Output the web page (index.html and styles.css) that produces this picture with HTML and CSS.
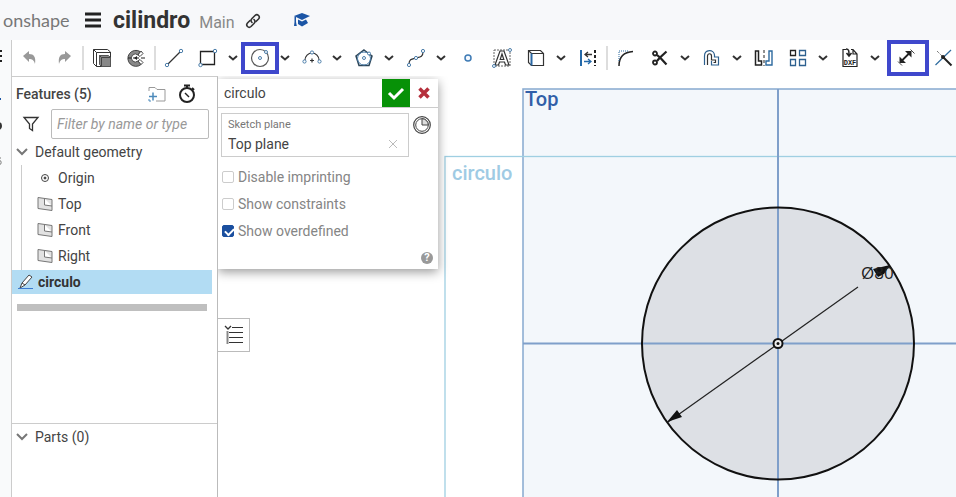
FILE: index.html
```html
<!DOCTYPE html>
<html lang="en">
<head>
<meta charset="utf-8">
<title>cilindro</title>
<link rel="stylesheet" href="styles.css">
</head>
<body>
<header class="header">
  <a class="brand" href="#">onshape</a>
  <button class="menu" aria-label="Menu"><svg width="16" height="16"><path d="M0 2h16M0 8h16M0 14h16" stroke="#222" stroke-width="3"/></svg></button>
  <h1 class="title">cilindro</h1>
  <span class="branch">Main</span>
  <button class="link" aria-label="Share link"><svg width="16" height="16" viewBox="0 0 16 16" fill="none" stroke="#333" stroke-width="1.600" stroke-linecap="round"><path d="M7 9.500C5.500 8 6 6.500 7 5.500L10 2.500C12.500 .3 15.700 3.500 13.500 6L11 8.500"/><path d="M9 6.500C10.500 8 10 9.500 9 10.500L6 13.500C3.500 15.700.3 12.500 2.500 10L5 7.500"/></svg></button>
  <button class="learn" aria-label="Learning center"><svg width="16" height="16" viewBox="0 0 16 16" fill="#1b55a5"><path d="M0 4 8 1l8 3-8 4z"/><path d="M.5 4.500h1.500V10l.8 4H0l.5-4zM4 7.500l4 2 4-2 2 3.500-6 3.500L4 12z"/></svg></button>
</header>
<div class="workspace">
  <aside class="rail" aria-label="Panels">
    <svg width="12" height="130"><path d="M0 11h2M0 16h2M0 21h2" stroke="#222" stroke-width="2"/><path d="M0 59h1" stroke="#1b55a5" stroke-width="2"/><circle cx="-2" cy="86" r="4" fill="#333"/><path d="M1 118H0M0 120.500c1.500 0 1.500 4 0 4" stroke="#777" fill="none"/></svg>
  </aside>
  <div class="main">
    <nav class="toolbar" aria-label="Sketch tools">
      <button class="tool" aria-label="Undo"><svg width="16" height="16" viewBox="0 0 16 16"><path d="M1 6l6-5v3c5 0 7 3 6 10-1-4-3-5-6-5v3z" fill="#999"/></svg></button>
      <button class="tool" aria-label="Redo"><svg width="16" height="16" viewBox="0 0 16 16"><path d="M15 6 9 1v3C4 4 2 7 3 14c1-4 3-5 6-5v3z" fill="#999"/></svg></button>
      <span class="sep"></span>
      <button class="tool" aria-label="Copy sketch"><svg width="20" height="20" viewBox="0 0 20 20" fill="none" stroke="#333"><path d="M1.500 1.500h14l3 2.500v14.500h-14l-3-3zM1.500 1.500l3 3h14M4.500 4.500v14"/><path d="M7.500 7.500h9l2 2v9h-9l-2-2z" fill="#888" stroke="#555"/><path d="M7.500 7.500l2 2h9M9.500 9.500v9" stroke="#444"/></svg></button>
      <button class="tool" aria-label="Imprint"><svg width="20" height="20" viewBox="0 0 20 20"><path d="M14 3.500A8 8 0 1 0 15 16.500l-3-3.500a4 4 0 1 1 0-6z" fill="#888" stroke="#444"/><path d="M12 7l3-4 2 2.500-3 3zM12 13l2-1.500 3 3-2 2z" stroke="#444" fill="#fff"/><path d="M2 10h3m2 0h6m2 0h4" stroke="#222" stroke-width="1.200"/><path d="M8 10l3-2v4z" fill="#222"/></svg></button>
      <span class="sep"></span>
      <button class="tool" aria-label="Line"><svg width="20" height="20" viewBox="0 0 20 20" fill="none"><path d="M4 16 16 4" stroke="#333" stroke-width="1.300"/><g stroke="#4c7eaa"><circle cx="3" cy="17" r="1.700"/><circle cx="17" cy="3" r="1.700"/></g></svg></button>
      <button class="tool" aria-label="Rectangle"><svg width="20" height="20" viewBox="0 0 20 20" fill="none"><path d="M2.500 3.500h14v13h-14z" stroke="#222" stroke-width="1.300"/><g stroke="#4c7eaa" fill="#fff"><circle cx="2.500" cy="17" r="1.700"/><circle cx="17" cy="3" r="1.700"/></g></svg></button>
      <button class="more" aria-label="More rectangles"><svg width="10" height="6"><path d="M1 1l4 3.500L9 1"/></svg></button>
      <button class="tool marked" aria-label="Circle"><svg width="20" height="20" viewBox="0 0 20 20" fill="none"><circle cx="10" cy="10" r="8.500" stroke="#555" stroke-width="1.200"/><g stroke="#4c7eaa" fill="#fff"><circle cx="10" cy="10" r="1.500"/><circle cx="16" cy="4" r="1.500"/></g></svg></button>
      <button class="more" aria-label="More circles"><svg width="10" height="6"><path d="M1 1l4 3.500L9 1"/></svg></button>
      <button class="tool" aria-label="Arc"><svg width="20" height="20" viewBox="0 0 20 20" fill="none"><path d="M3 12A7 7 0 0 1 17 12M8 12.500h4M10 10.500v4" stroke="#333" stroke-width="1.200"/><g stroke="#4c7eaa" fill="#fff"><circle cx="2.500" cy="13.500" r="1.600"/><circle cx="17.500" cy="13.500" r="1.600"/><circle cx="10" cy="4.500" r="1.600"/></g></svg></button>
      <button class="more" aria-label="More arcs"><svg width="10" height="6"><path d="M1 1l4 3.500L9 1"/></svg></button>
      <button class="tool" aria-label="Polygon"><svg width="20" height="20" viewBox="0 0 20 20" fill="none"><path d="M10 2l8 6-3 9.500H5L2 8z" stroke="#2c4558" stroke-width="1.500"/><circle cx="10" cy="10.500" r="6.500" stroke="#4c7eaa"/><g stroke="#4c7eaa" fill="#fff"><circle cx="10" cy="10" r="1.500"/><circle cx="15" cy="5.500" r="1.500"/></g></svg></button>
      <button class="more" aria-label="More polygons"><svg width="10" height="6"><path d="M1 1l4 3.500L9 1"/></svg></button>
      <button class="tool" aria-label="Spline"><svg width="20" height="20" viewBox="0 0 20 20" fill="none"><path d="M3 16c0-5 3-5 7-6s7-1 7-6" stroke="#333" stroke-width="1.200"/><g stroke="#4c7eaa" fill="#fff"><circle cx="3" cy="17" r="1.600"/><circle cx="10" cy="10" r="1.600"/><circle cx="17" cy="3" r="1.600"/></g></svg></button>
      <button class="more" aria-label="More splines"><svg width="10" height="6"><path d="M1 1l4 3.500L9 1"/></svg></button>
      <button class="tool" aria-label="Point"><svg width="20" height="20"><circle cx="10" cy="10" r="3" fill="#f4f9ff" stroke="#3f7bb5" stroke-width="1.500"/></svg></button>
      <button class="tool" aria-label="Text"><svg width="20" height="20" viewBox="0 0 20 20" fill="none"><path d="M2 2h16v16H2z" stroke="#666" stroke-dasharray="2 1"/><path d="M8 3h4l5 14h-3.500l-1-3h-5l-1 3H3zM10 6l-1.800 5.500h3.600z" stroke="#333" fill="#fff" stroke-width="1.200"/><g stroke="#4c7eaa" fill="#fff"><circle cx="2" cy="18" r="1.500"/><circle cx="18" cy="2" r="1.500"/></g></svg></button>
      <button class="tool" aria-label="Use"><svg width="20" height="20" viewBox="0 0 20 20" fill="none" stroke="#333"><path d="M2.500 2.500h12l3 3v12h-12l-3-3zM2.500 2.500l3 3h12" stroke-width="1.200"/><path d="M5.500 5.500v12" stroke="#2a68a5" stroke-width="2"/></svg></button>
      <button class="more" aria-label="More use tools"><svg width="10" height="6"><path d="M1 1l4 3.500L9 1"/></svg></button>
      <button class="tool" aria-label="Mirror reference"><svg width="20" height="20" viewBox="0 0 20 20"><path d="M3 2v16" stroke="#2469a9" stroke-width="2"/><path d="M17 2v16" stroke="#222" stroke-width="2" stroke-dasharray="3 2"/><path d="M7 6.500h7M10 4 7 6.500 10 9" stroke="#333" stroke-width="1.300" fill="none"/><path d="M6 13.500h7m-3-2.500 3 2.500-3 2.500" stroke="#2469a9" stroke-width="1.300" fill="none"/></svg></button>
      <span class="sep"></span>
      <button class="tool" aria-label="Fillet"><svg width="20" height="20" viewBox="0 0 20 20" fill="none"><path d="M3 18C3 9 8 4 17 3.500" stroke="#222" stroke-width="1.500"/><path d="M3 13V3h9" stroke="#2d6a9f" stroke-dasharray="1 1"/></svg></button>
      <button class="tool" aria-label="Trim"><svg width="20" height="20" viewBox="0 0 20 20" fill="none" stroke="#222" stroke-width="1.800"><circle cx="5" cy="5.500" r="2"/><circle cx="5" cy="14.500" r="2"/><path d="M7 7l3 2.500 6.500-6M7 13l3-3.500 6.500 7" stroke-width="2.200"/></svg></button>
      <button class="more" aria-label="More trim tools"><svg width="10" height="6"><path d="M1 1l4 3.500L9 1"/></svg></button>
      <button class="tool" aria-label="Offset"><svg width="20" height="20" viewBox="0 0 20 20" fill="none" stroke-width="1.200"><path d="M2.500 17V8C2.500 1 12 1 12.500 7v2h4v8h-7v-4" stroke="#2d608f"/><path d="M5.500 17V8c0-3 4-3 4 0v4h4v2.500h-2" stroke="#333"/></svg></button>
      <button class="more" aria-label="More offset tools"><svg width="10" height="6"><path d="M1 1l4 3.500L9 1"/></svg></button>
      <button class="tool" aria-label="Mirror"><svg width="20" height="20" viewBox="0 0 20 20" fill="none"><path d="M1.500 3h3v10h3v4h-6z" stroke="#222" stroke-width="1.500"/><path d="M18 3h-3v10h-3v4h6z" stroke="#2d6a9f" stroke-width="1.400"/><path d="M10 2v16" stroke="#222" stroke-dasharray="3 2"/></svg></button>
      <button class="tool" aria-label="Pattern"><svg width="20" height="20" viewBox="0 0 20 20" fill="none" stroke-width="1.300"><path d="M2.500 2.500h5v5h-5z" stroke="#222"/><path d="M11.500 2.500h6v5h-6zM2.500 11.500h5v6h-5zM11.500 11.500h6v6h-6z" stroke="#2d608f"/></svg></button>
      <button class="more" aria-label="More patterns"><svg width="10" height="6"><path d="M1 1l4 3.500L9 1"/></svg></button>
      <button class="tool" aria-label="Insert DXF"><svg width="20" height="20" viewBox="0 0 20 20" fill="none" stroke="#222" stroke-width="1.200"><path d="M6 1.500H3v17h14V6l-4-4.500h-2M13 1.500V6h4"/><path d="M6 1c3 0 3 2 3 6M6.500 5 9 8l2.500-3" stroke-width="1.500"/><text x="10" y="16.500" class="dxf">DXF</text></svg></button>
      <button class="more" aria-label="More import tools"><svg width="10" height="6"><path d="M1 1l4 3.500L9 1"/></svg></button>
      <button class="tool dimension" aria-label="Dimension"><svg width="20" height="20" viewBox="0 0 20 20"><path d="M6 12.500 13 5.500" stroke="#222" stroke-width="1.800"/><path d="M9 3h6.500v6.500zM3.500 8.500V15H10z" fill="#222"/><path d="M14.500 1.500l4 4M2 13.500l4 4" stroke="#444"/></svg></button>
      <button class="tool" aria-label="Constraint"><svg width="20" height="20" viewBox="0 0 20 20"><path d="M1.500 17 17 2" stroke="#2e6b9e" stroke-width="1.200"/><path d="M3 3l6 6" stroke="#444" stroke-dasharray="1 1"/><path d="M9 9l8.500 8.500" stroke="#222" stroke-width="2"/><circle cx="9" cy="9" r="2" fill="#222"/></svg></button>
    </nav>
    <div class="content">
      <section class="sidebar" aria-label="Features">
        <div class="side-head">
          <h2 class="side-title">Features (5)</h2>
          <button class="plain" aria-label="Add folder"><svg width="18" height="16" viewBox="0 0 18 16" fill="none"><path d="M1 5V1.500h6l2 2h8V15H8" stroke="#999"/><path d="M5 6.500v8M1 10.500h8" stroke="#4c8abb" stroke-width="1.500"/><path d="M1 13v2h2" stroke="#4c8abb"/></svg></button>
          <button class="plain" aria-label="Rebuild times"><svg width="18" height="20" viewBox="0 0 18 20" fill="none" stroke="#222" stroke-width="2"><circle cx="9" cy="11" r="7"/><path d="M6 1.500h6M9 1v3M14 4l2 2"/><path d="M7 9l4 4" stroke-width="1.500"/></svg></button>
        </div>
        <div class="filter">
          <svg width="16" height="16" viewBox="0 0 16 16" fill="none" stroke="#333" stroke-width="1.300"><path d="M1 1.500h14L9.500 8v6.500l-3-2V8z"/></svg>
          <input type="text" class="filter-input" aria-label="Filter features" placeholder="Filter by name or type">
        </div>
        <button class="group"><svg width="12" height="8"><path d="M1 1l5 5 5-5"/></svg>Default geometry</button>
        <ul class="tree">
          <li><svg width="16" height="16" fill="none" stroke="#444"><circle cx="8" cy="8" r="3.500"/><circle cx="8" cy="8" r="1" fill="#333"/></svg>Origin</li>
          <li><svg width="16" height="16" viewBox="0 0 16 16" fill="#e2e2e2" stroke="#777"><path d="M1 1.500l14 2v11l-14-2zM7.500 2.500V9l7.500 1"/></svg>Top</li>
          <li><svg width="16" height="16" viewBox="0 0 16 16" fill="#e2e2e2" stroke="#777"><path d="M1 1.500l14 2v11l-14-2zM7.500 2.500V9l7.500 1"/></svg>Front</li>
          <li><svg width="16" height="16" viewBox="0 0 16 16" fill="#e2e2e2" stroke="#777"><path d="M1 1.500l14 2v11l-14-2zM7.500 2.500V9l7.500 1"/></svg>Right</li>
        </ul>
        <button class="selected"><svg width="16" height="16" viewBox="0 0 16 16"><path d="M2 14l2-5 7-8 3 2-7 8zM4 9l3 2" fill="#fff" stroke="#444"/><path d="M0 14.500h15" stroke="#3c7bd0"/></svg>circulo</button>
        <div class="rollback"></div>
        <div class="parts"><button class="group"><svg width="12" height="8"><path d="M1 1l5 5 5-5"/></svg>Parts (0)</button></div>
      </section>
      <main class="viewport">
        <svg class="scene" role="img" aria-label="Sketch of a circle, diameter 80">
          <g transform="translate(-218 -76)">
            <rect x="523" y="89" width="2000" height="2000" fill="#f3f7fb" stroke="#87a9cf" stroke-width="1.500"/>
            <rect x="445" y="156.500" width="2000" height="2000" fill="none" stroke="#9fcfe2" stroke-width="1.300"/>
            <circle cx="778" cy="343.500" r="136" fill="#dde0e5"/>
            <path d="M778 89v2000M523 343.500h2000" stroke="#7f9fca" stroke-width="2"/>
            <circle cx="778" cy="343.500" r="136" fill="none" stroke="#111" stroke-width="2"/>
            <path d="M668 422 858 287" stroke="#222" stroke-width="1.200"/>
            <path d="M667 422l10-12 5 7zM890 265l-17 4 5 8 6-3z" fill="#111"/>
            <circle cx="778" cy="343.500" r="4.500" fill="#eee" stroke="#111" stroke-width="2"/>
            <circle cx="778" cy="343.500" r="1.500" fill="#111"/>
            <text x="525" y="106" class="plane-name">Top</text>
            <text x="452" y="180" class="sketch-name">circulo</text>
            <text x="861" y="279" class="measure">Ø80</text>
          </g>
        </svg>
        <form class="dialog" aria-label="Sketch">
          <div class="dialog-head">
            <span class="dialog-title">circulo</span>
            <button type="button" class="accept" aria-label="Accept"><svg width="16" height="13"><path d="M1 6l5 5 9-9" fill="none" stroke="#fff" stroke-width="3"/></svg></button>
            <button type="button" class="cancel" aria-label="Cancel"><svg width="12" height="12"><path d="M1.500 1.500l9 9M10.500 1.500l-9 9" stroke="#b5303c" stroke-width="3.500"/></svg></button>
          </div>
          <div class="plane-row">
            <div class="plane">
              <label for="plane">Sketch plane</label>
              <div class="plane-value"><input id="plane" type="text" value="Top plane"><button type="button" class="plain" aria-label="Clear"><svg width="8" height="8"><path d="M0 0l8 8M8 0 0 8" stroke="#bbb"/></svg></button></div>
            </div>
            <button type="button" class="plain clock" aria-label="Final state"><svg width="18" height="18" viewBox="0 0 18 18" fill="none" stroke="#444"><circle cx="9" cy="9" r="8.300" stroke-width="1.200"/><circle cx="9" cy="9" r="6.300"/><path d="M9 2.700V9h6.300A6.300 6.300 0 0 0 9 2.700z" fill="#ddd"/></svg></button>
          </div>
          <div class="checks">
            <label><input type="checkbox">Disable imprinting</label>
            <label><input type="checkbox">Show constraints</label>
            <label><input type="checkbox" checked>Show overdefined</label>
          </div>
          <button type="button" class="help" aria-label="Help">?</button>
        </form>
        <button class="list-toggle" aria-label="Toggle feature list"><svg width="20" height="20" viewBox="0 0 20 20" fill="none" stroke="#333"><path d="M8 2.500h11M5 7.500h14M5 12.500h14M5 17.500h14" stroke-width="1.200"/><path d="M1 1l3 3 3-3" stroke-width="1.300"/><path d="M3.500 6v13" stroke="#888" stroke-width="2"/></svg></button>
      </main>
    </div>
  </div>
</div>
</body>
</html>
```

FILE: styles.css
```css
* { box-sizing: border-box; }
body {
  margin: 0;
  height: 100vh;
  display: flex;
  flex-direction: column;
  overflow: hidden;
  background: #fff;
  color: #444;
  font: 14px/20px Roboto, "Liberation Sans", sans-serif;
}
button {
  margin: 0;
  padding: 0;
  border: 0;
  background: none;
  color: inherit;
  font: inherit;
  display: flex;
  align-items: center;
  justify-content: center;
  flex: none;
}
svg { flex: none; overflow: visible; }
h1, h2 { margin: 0; }

.header {
  flex: none;
  height: 40px;
  display: flex;
  align-items: center;
  padding-left: 3px;
  background: #f7f8fa;
}
.brand { width: 82px; color: #777; font: 18px/22px Lato, sans-serif; text-decoration: none; }
.title { margin: 2px 0 0 12px; color: #333; font-size: 23px; line-height: 24px; font-weight: 700; }
.branch { margin: 6px 10px 0 9px; color: #888; font-size: 16px; }
.link { margin-top: 2px; }
.learn { margin-left: 33px; }

.workspace { flex: 1; min-height: 0; display: flex; }
.rail { flex: none; width: 12px; background: #f9fafb; border-right: 1px solid #ccc; overflow: hidden; }
.main { flex: 1; min-width: 0; display: flex; flex-direction: column; }

.toolbar { flex: none; height: 36px; display: flex; align-items: center; padding-left: 1px; overflow: visible; }
.tool { width: 34px; height: 28px; }
.more { width: 18px; height: 28px; padding-right: 2px; }
.more path { fill: none; stroke: #333; stroke-width: 2; }
.marked { outline: 4px solid #3f48cc; outline-offset: -2px; }
.dimension { width: 42px; height: 36px; margin-left: 2px; padding-right: 4px; border: 4px solid #3f48cc; margin-right: -2px; }
.sep { flex: none; width: 4px; height: 26px; border: 1px solid #fff; background: #ddd; }
.dxf { font: 700 7px "Liberation Mono", monospace; fill: #222; stroke: none; text-anchor: middle; }

.content { flex: 1; min-height: 0; display: flex; }
.sidebar {
  flex: none;
  width: 206px;
  display: flex;
  flex-direction: column;
  border-top: 1px solid #ccc;
  border-right: 1px solid #bbb;
}
.side-head { display: flex; align-items: center; gap: 12px; height: 32px; padding: 2px 21px 0 4px; }
.side-title { flex: 1; font-size: 14px; font-weight: 500; }
.filter { display: flex; align-items: center; gap: 12px; padding: 0 8px 0 11px; }
.filter-input { flex: 1; min-width: 0; height: 30px; padding: 0 5px; border: 1px solid #bbb; border-radius: 2px; font: italic 14px Roboto, sans-serif; }
.filter-input::placeholder { color: #999; }
.group { height: 26px; gap: 7px; padding-left: 4px; justify-content: flex-start; }
.group path { fill: none; stroke: #777; stroke-width: 2; }
.tree { margin: 0 0 0 9px; padding: 0 0 0 15px; border-left: 1px solid #ccc; list-style: none; height: 105px; }
.tree li { display: flex; align-items: center; gap: 5px; height: 26px; }
.selected { height: 24px; margin-right: 5px; padding-left: 6px; gap: 4px; justify-content: flex-start; background: #b2dcf3; color: #333; font-weight: 700; }
.rollback { height: 7px; margin: 10px 10px 0 5px; background: #bfbfbf; }
.parts { margin-top: 112px; border-top: 1px solid #ccc; }

.viewport { flex: 1; min-width: 0; position: relative; overflow: hidden; }
.scene { display: block; width: 100%; height: 100%; }
.plane-name, .sketch-name { font-size: 20px; font-weight: 500; fill: #315fa8; }
.sketch-name { fill: #9fcbe4; }
.measure { font: 17px "Open Sans", sans-serif; fill: #222; }

.dialog { position: absolute; top: 3px; left: 0; width: 220px; background: #fff; box-shadow: 0 3px 10px rgba(0, 0, 0, .4); }
.dialog-head { display: flex; align-items: center; height: 29px; padding-left: 6px; border-bottom: 1px solid #ccc; }
.dialog-title { flex: 1; }
.accept { width: 28px; height: 28px; background: #079107; }
.cancel { width: 28px; height: 28px; }
.plane-row { display: flex; align-items: flex-start; gap: 4px; padding: 5px 7px 0 3px; }
.plane { flex: 1; min-width: 0; height: 44px; padding: 3px 11px 0 6px; border: 1px solid #ccc; }
.plane label { display: block; font-size: 11px; line-height: 16px; color: #777; }
.plane-value { display: flex; align-items: center; padding-top: 1px; }
.plane-value input { flex: 1; min-width: 0; height: 20px; padding: 0; border: 0; background: none; color: #444; font: inherit; }
.clock { margin-top: 3px; }
.checks { display: flex; flex-direction: column; gap: 7px; padding: 10px 4px 0; color: #858585; }
.checks label { display: flex; align-items: center; gap: 4px; }
.checks input { appearance: none; width: 12px; height: 12px; margin: 0; border: 1px solid #ccc; border-radius: 2px; }
.checks input:checked { position: relative; background: #1b4f9f; border-color: #1b4f9f; }
.checks input:checked::after { content: ""; position: absolute; left: 2px; top: 2px; width: 7px; height: 4px; border: solid #fff; border-width: 0 0 2px 2px; transform: rotate(-45deg); }
.help { width: 12px; height: 12px; margin: 11px 5px 5px auto; border-radius: 50%; background: #999; color: #fff; font-size: 11px; line-height: 12px; font-weight: 700; }
.list-toggle { position: absolute; left: 0; top: 242px; width: 32px; height: 34px; border: 1px solid #bbb; border-left: 0; background: #fff; }
```
